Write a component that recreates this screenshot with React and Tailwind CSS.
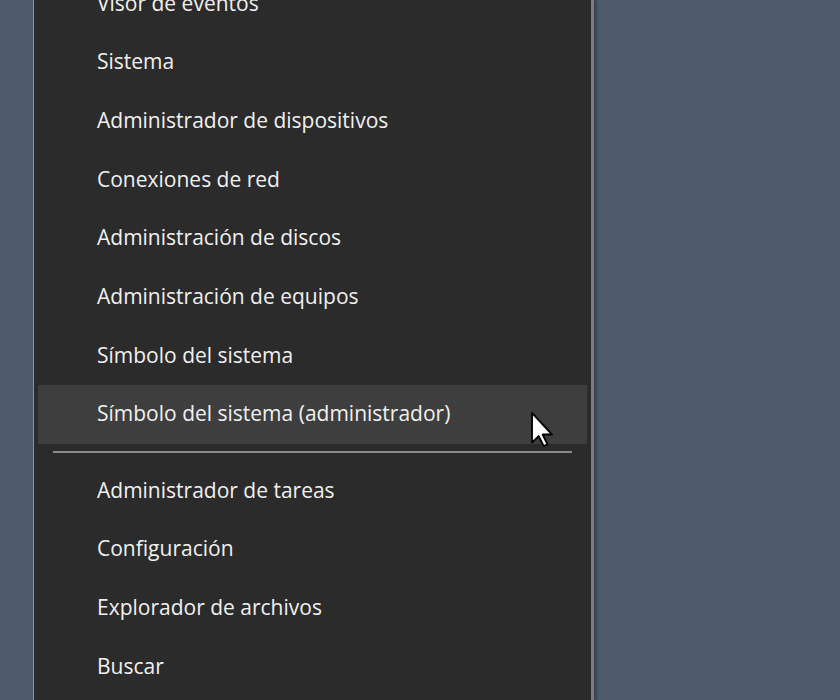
const items = [
  'Visor de eventos',
  'Sistema',
  'Administrador de dispositivos',
  'Conexiones de red',
  'Administración de discos',
  'Administración de equipos',
  'Símbolo del sistema',
  'Símbolo del sistema (administrador)',
]

const after = ['Administrador de tareas', 'Configuración', 'Explorador de archivos', 'Buscar']

function Cursor() {
  return (
    <svg width="23" height="35" viewBox="0 0 12 18.3" className="absolute left-[493px] top-[27px]">
      <path
        d="M0.5 0.5 L0.5 16 L4 12.6 L6.6 17.8 L8.6 16.9 L6.1 11.8 L11 11.8 Z"
        fill="#fff"
        stroke="#000"
        strokeWidth="1"
        strokeLinejoin="round"
      />
    </svg>
  )
}

function Row({ label, active }) {
  return (
    <div className={`relative flex h-[58.7px] shrink-0 items-center px-[59px] ${active ? 'bg-[#3e3e3e]' : ''}`}>
      <span className="whitespace-nowrap">{label}</span>
      {active && <Cursor />}
    </div>
  )
}

export default function App() {
  return (
    <div className="h-[700px] w-[840px] overflow-hidden bg-[#4f5b6b]">
      <div className="ml-[33px] flex h-full w-[561px] overflow-hidden border-l border-r-[3px] border-l-[#8592a0] border-r-[#7c7c7c] bg-[#2b2b2b] shadow-[3px_0_2px_rgba(0,0,0,0.25)]">
        <div
          className="-mt-[26px] flex flex-1 flex-col px-[4px] text-[21px] text-[#f0f0f0]"
          style={{ fontFamily: '"Segoe UI", "Open Sans", "Noto Sans", sans-serif' }}
        >
          {items.map((label, i) => (
            <Row key={label} label={label} active={i === items.length - 1} />
          ))}
          <div className="flex h-[17.6px] shrink-0 flex-col px-[15px] pt-[7px]">
            <div className="h-[2px] bg-[#8a8a8a]" />
          </div>
          {after.map((label) => (
            <Row key={label} label={label} />
          ))}
        </div>
      </div>
    </div>
  )
}
